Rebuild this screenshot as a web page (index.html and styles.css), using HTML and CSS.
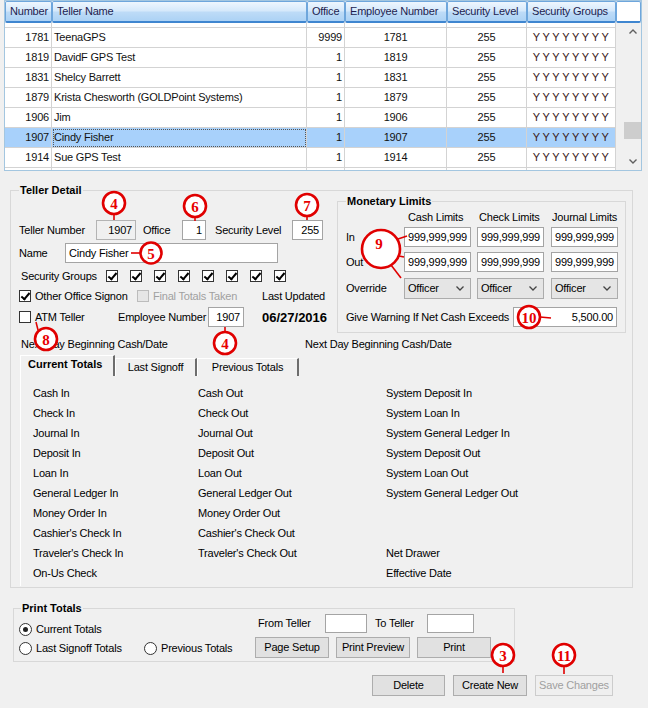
FILE: index.html
```html
<!DOCTYPE html>
<html>
<head>
<meta charset="utf-8">
<title>Teller Maintenance</title>
<link rel="stylesheet" href="styles.css">
</head>
<body>
<div class="grid">
  <div class="grid-head">
    <div class="th">Number</div>
    <div class="th">Teller Name</div>
    <div class="th">Office</div>
    <div class="th">Employee Number</div>
    <div class="th">Security Level</div>
    <div class="th">Security Groups</div>
    <div class="th blank"></div>
  </div>
  <div class="grid-body">
    <div class="rows">
      <div class="row stub"><div class="td"></div><div class="td"></div><div class="td"></div><div class="td"></div><div class="td"></div><div class="td"></div></div>
      <div class="row"><div class="td r">1781</div><div class="td">TeenaGPS</div><div class="td r">9999</div><div class="td c">1781</div><div class="td c">255</div><div class="td c yy">YYYYYYYY</div></div>
      <div class="row"><div class="td r">1819</div><div class="td">DavidF GPS Test</div><div class="td r">1</div><div class="td c">1819</div><div class="td c">255</div><div class="td c yy">YYYYYYYY</div></div>
      <div class="row"><div class="td r">1831</div><div class="td">Shelcy Barrett</div><div class="td r">1</div><div class="td c">1831</div><div class="td c">255</div><div class="td c yy">YYYYYYYY</div></div>
      <div class="row"><div class="td r">1879</div><div class="td">Krista Chesworth (GOLDPoint Systems)</div><div class="td r">1</div><div class="td c">1879</div><div class="td c">255</div><div class="td c yy">YYYYYYYY</div></div>
      <div class="row"><div class="td r">1906</div><div class="td">Jim</div><div class="td r">1</div><div class="td c">1906</div><div class="td c">255</div><div class="td c yy">YYYYYYYY</div></div>
      <div class="row sel"><div class="td r">1907</div><div class="td focus">Cindy Fisher</div><div class="td r">1</div><div class="td c">1907</div><div class="td c">255</div><div class="td c yy">YYYYYYYY</div></div>
      <div class="row"><div class="td r">1914</div><div class="td">Sue GPS Test</div><div class="td r">1</div><div class="td c">1914</div><div class="td c">255</div><div class="td c yy">YYYYYYYY</div></div>
      <div class="row"><div class="td"></div><div class="td"></div><div class="td"></div><div class="td"></div><div class="td"></div><div class="td"></div></div>
    </div>
    <div class="vscroll">
      <div class="sb-btn"><svg width="8" height="5" viewBox="0 0 8 5"><polyline points="0.5,4.5 4,1 7.5,4.5" fill="none" stroke="#606060" stroke-width="1.4"/></svg></div>
      <div class="sb-track"><div class="sb-thumb"></div></div>
      <div class="sb-btn"><svg width="8" height="5" viewBox="0 0 8 5"><polyline points="0.5,0.5 4,4 7.5,0.5" fill="none" stroke="#606060" stroke-width="1.4"/></svg></div>
    </div>
  </div>
</div>

<div class="group teller">
  <div class="group-title">Teller Detail</div>
  <div class="td-top">
    <div class="td-left">
      <div class="frow h20">
        <span class="lbl w77">Teller Number</span>
        <span class="tb ro w40">1907</span>
        <span class="lbl ml7 w39">Office</span>
        <span class="tb w24">1</span>
        <span class="lbl ml9 w77">Security Level</span>
        <span class="tb w31">255</span>
      </div>
      <div class="frow h20 mt3">
        <span class="lbl w46">Name</span>
        <span class="tb left w213">Cindy Fisher</span>
      </div>
      <div class="frow h14 mt6">
        <span class="lbl w87 pl2">Security Groups</span>
        <div class="cbs">
          <span class="cb on"></span><span class="cb on"></span><span class="cb on"></span><span class="cb on"></span>
          <span class="cb on"></span><span class="cb on"></span><span class="cb on"></span><span class="cb on"></span>
        </div>
      </div>
      <div class="frow h14 mt6">
        <span class="chk w118"><span class="cb on"></span><span class="cbl">Other Office Signon</span></span>
        <span class="chk w125 dis"><span class="cb off-dis"></span><span class="cbl">Final Totals Taken</span></span>
        <span class="lbl">Last Updated</span>
      </div>
      <div class="frow h20 mt4">
        <span class="chk w99"><span class="cb"></span><span class="cbl">ATM Teller</span></span>
        <span class="lbl w90">Employee Number</span>
        <span class="tb w36">1907</span>
        <span class="date">06/27/2016</span>
      </div>
    </div>
    <div class="group mon">
      <div class="group-title">Monetary Limits</div>
      <div class="mrow mhead">
        <span class="mlbl"></span>
        <span class="mcol"><span class="ml4">Cash Limits</span></span>
        <span class="mcol g6"><span class="ml2">Check Limits</span></span>
        <span class="mcol g7"><span class="ml1">Journal Limits</span></span>
      </div>
      <div class="mrow mt3 h20">
        <span class="mlbl">In</span>
        <span class="tb mbox">999,999,999</span>
        <span class="tb mbox g6">999,999,999</span>
        <span class="tb mbox g7">999,999,999</span>
      </div>
      <div class="mrow mt5 h20">
        <span class="mlbl">Out</span>
        <span class="tb mbox">999,999,999</span>
        <span class="tb mbox g6">999,999,999</span>
        <span class="tb mbox g7">999,999,999</span>
      </div>
      <div class="mrow mt6 h21">
        <span class="mlbl">Override</span>
        <span class="dd mbox">Officer<svg width="8" height="5" viewBox="0 0 8 5"><polyline points="0.5,0.5 4,4 7.5,0.5" fill="none" stroke="#444" stroke-width="1.3"/></svg></span>
        <span class="dd mbox g6">Officer<svg width="8" height="5" viewBox="0 0 8 5"><polyline points="0.5,0.5 4,4 7.5,0.5" fill="none" stroke="#444" stroke-width="1.3"/></svg></span>
        <span class="dd mbox g7">Officer<svg width="8" height="5" viewBox="0 0 8 5"><polyline points="0.5,0.5 4,4 7.5,0.5" fill="none" stroke="#444" stroke-width="1.3"/></svg></span>
      </div>
      <div class="mrow mt8 h20">
        <span class="lbl w167">Give Warning If Net Cash Exceeds</span>
        <span class="tb w104">5,500.00</span>
      </div>
    </div>
  </div>
  <div class="nextday">
    <span class="lbl w286 pl2">Next Day Beginning Cash/Date</span>
    <span class="lbl">Next Day Beginning Cash/Date</span>
  </div>
  <div class="tabs">
    <div class="tab sel w95">Current Totals</div>
    <div class="tab w82">Last Signoff</div>
    <div class="tab w102">Previous Totals</div>
  </div>
  <div class="tabpage">
    <div class="totals">
      <div>Cash In</div><div>Cash Out</div><div>System Deposit In</div>
      <div>Check In</div><div>Check Out</div><div>System Loan In</div>
      <div>Journal In</div><div>Journal Out</div><div>System General Ledger In</div>
      <div>Deposit In</div><div>Deposit Out</div><div>System Deposit Out</div>
      <div>Loan In</div><div>Loan Out</div><div>System Loan Out</div>
      <div>General Ledger In</div><div>General Ledger Out</div><div>System General Ledger Out</div>
      <div>Money Order In</div><div>Money Order Out</div><div></div>
      <div>Cashier's Check In</div><div>Cashier's Check Out</div><div></div>
      <div>Traveler's Check In</div><div>Traveler's Check Out</div><div>Net Drawer</div>
      <div>On-Us Check</div><div></div><div>Effective Date</div>
    </div>
  </div>
</div>

<div class="group print">
  <div class="group-title pt-title">Print Totals</div>
  <div class="pt-body">
    <div class="pt-left">
      <div class="frow h13 mt9">
        <span class="rb on"></span><span class="cbl">Current Totals</span>
      </div>
      <div class="frow h13 mt6">
        <span class="chk w125"><span class="rb"></span><span class="cbl">Last Signoff Totals</span></span>
        <span class="rb"></span><span class="cbl">Previous Totals</span>
      </div>
    </div>
    <div class="pt-right">
      <div class="frow h19">
        <span class="lbl w70 pl3">From Teller</span>
        <span class="tb w42"></span>
        <span class="lbl w52 ml8">To Teller</span>
        <span class="tb w47"></span>
      </div>
      <div class="frow mt4 btns">
        <span class="btn w74">Page Setup</span>
        <span class="btn w74">Print Preview</span>
        <span class="btn w74">Print</span>
      </div>
    </div>
  </div>
</div>

<div class="actions">
  <span class="btn w73">Delete</span>
  <span class="btn w74">Create New</span>
  <span class="btn w78 disabled">Save Changes</span>
</div>

<svg class="marks" width="648" height="708" viewBox="0 0 648 708">
  <line x1="114" y1="213" x2="114" y2="220"/>
  <circle cx="114" cy="203" r="11"/>
  <text x="114" y="208.5">4</text>

  <line x1="195" y1="216" x2="195" y2="221"/>
  <circle cx="195" cy="206" r="11"/>
  <text x="195" y="211.5">6</text>

  <line x1="307" y1="215" x2="307" y2="220"/>
  <circle cx="307" cy="205" r="11"/>
  <text x="307" y="210.5">7</text>

  <line x1="141" y1="253" x2="131" y2="253"/>
  <circle cx="151" cy="253" r="10.5"/>
  <text x="151" y="258.5">5</text>

  <line x1="38" y1="330" x2="36" y2="322"/>
  <circle cx="46" cy="339" r="11"/>
  <text x="46" y="344.5">8</text>

  <line x1="225" y1="333" x2="225" y2="327"/>
  <circle cx="225" cy="343" r="11"/>
  <text x="225" y="348.5">4</text>

  <line x1="395" y1="240" x2="407" y2="236"/>
  <line x1="394" y1="255" x2="404" y2="257"/>
  <line x1="391" y1="265" x2="401" y2="278"/>
  <circle cx="381" cy="249" r="19"/>
  <text x="379" y="249">9</text>

  <line x1="540" y1="317" x2="551" y2="318"/>
  <circle cx="529" cy="317" r="11"/>
  <text x="529" y="322.5">10</text>

  <line x1="503" y1="666" x2="503" y2="673"/>
  <circle cx="503" cy="655" r="11"/>
  <text x="503" y="660.5">3</text>

  <line x1="564" y1="666" x2="564" y2="674"/>
  <circle cx="564" cy="655" r="11"/>
  <text x="564" y="660.5">11</text>
</svg>
</body>
</html>
```

FILE: styles.css
```css
* { box-sizing: border-box; }
html, body { margin: 0; padding: 0; }
body {
  width: 648px;
  height: 708px;
  overflow: hidden;
  position: relative;
  background: #f0f0f0;
  font-family: "Liberation Sans", Arial, sans-serif;
  font-size: 11px;
  line-height: 13px;
  letter-spacing: -0.2px;
  color: #000;
}

/* ---------- data grid ---------- */
.grid {
  margin-left: 4px;
  width: 638px;
  height: 171px;
  border: 1px solid #a3c6e0;
  background: #f0f0f0;
  overflow: hidden;
}
.grid-head {
  display: grid;
  grid-template-columns: 47px 255px 38px 102px 80px 89px 25px;
  height: 22px;
}
.th {
  background: linear-gradient(#eef6fe, #d6e9fb 45%, #bddbf7 55%, #acd2f5);
  border: 1px solid #6ea6dc;
  border-bottom: 2px solid #3f86d0;
  border-radius: 2px;
  padding-left: 4px;
  line-height: 18px;
  color: #1d1d4f;
  white-space: nowrap;
  overflow: hidden;
}
.th.blank { background: #fff; }
.grid-body { display: flex; height: 147px; }
.rows { width: 611px; background: #fff; overflow: hidden; }
.row {
  display: grid;
  grid-template-columns: 47px 255px 38px 102px 80px 89px;
  height: 20px;
}
.row.stub { height: 5px; }
.td {
  border-right: 1px solid #d3d3d3;
  border-bottom: 1px solid #d3d3d3;
  line-height: 19px;
  padding: 0 2px;
  white-space: nowrap;
  overflow: hidden;
  color: #111;
}
.td.r { text-align: right; }
.td.c { text-align: center; }
.yy { letter-spacing: 2.5px; padding-left: 4px; color: #3a2020; }
.row.sel .td { background: #a8d1fb; }
.row.sel .focus { outline: 1px dotted #555; outline-offset: -2px; }
.vscroll {
  width: 25px;
  padding-left: 8px;
  display: flex;
  flex-direction: column;
  background: #f0f0f0;
}
.sb-btn {
  height: 17px;
  display: flex;
  align-items: center;
  justify-content: center;
}
.sb-track { flex: 1; }
.sb-thumb {
  margin-top: 82px;
  height: 17px;
  background: #cdcdcd;
}

/* ---------- group boxes ---------- */
.group { border: 1px solid #d8d8d8; }
.group-title {
  width: fit-content;
  margin-top: -7px;
  padding: 0 1px;
  background: #f0f0f0;
  font-weight: bold;
  line-height: 13px;
  letter-spacing: 0;
}
.teller {
  margin: 19px 15px 0 10px;
  padding: 0 0 1px 8px;
}
.td-top { display: flex; }
.td-left { width: 318px; padding-top: 23px; }

.frow { display: flex; align-items: center; }
.h13 { height: 13px; }
.h14 { height: 14px; }
.h19 { height: 19px; }
.h20 { height: 20px; }
.h21 { height: 21px; }
.mt3 { margin-top: 3px; }
.mt4 { margin-top: 4px; }
.mt5 { margin-top: 5px; }
.mt6 { margin-top: 6px; }
.mt8 { margin-top: 8px; }
.mt9 { margin-top: 9px; }
.ml1 { margin-left: 1px; }
.ml2 { margin-left: 2px; }
.ml4 { margin-left: 4px; }
.ml7 { margin-left: 7px; }
.ml8 { margin-left: 8px; }
.ml9 { margin-left: 9px; }
.pl2 { padding-left: 2px; }
.pl3 { padding-left: 3px; }

.lbl { white-space: nowrap; flex: none; }
.w24 { width: 24px; }
.w31 { width: 31px; }
.w36 { width: 36px; }
.w39 { width: 39px; }
.w40 { width: 40px; }
.w42 { width: 42px; }
.w46 { width: 46px; }
.w47 { width: 47px; }
.w52 { width: 52px; }
.w70 { width: 70px; }
.w73 { width: 73px; }
.w74 { width: 74px; }
.w77 { width: 77px; }
.w78 { width: 78px; }
.w82 { width: 82px; }
.w87 { width: 87px; }
.w90 { width: 90px; }
.w95 { width: 95px; }
.w99 { width: 99px; }
.w102 { width: 102px; }
.w104 { width: 104px; }
.w118 { width: 118px; }
.w125 { width: 125px; }
.w167 { width: 167px; }
.w213 { width: 213px; }
.w286 { width: 286px; }

.tb {
  flex: none;
  display: block;
  height: 20px;
  border: 1px solid #a4a4a4;
  background: #fff;
  text-align: right;
  padding: 0 3px;
  line-height: 18px;
  white-space: nowrap;
  overflow: hidden;
}
.h19 .tb { height: 19px; }
.tb.ro { background: #f0f0f0; border-color: #b4b4b4; }
.tb.left { text-align: left; }

.cbs { display: flex; gap: 12px; }
.cb {
  flex: none;
  width: 12px;
  height: 12px;
  border: 1px solid #333;
  background: #fff;
  position: relative;
}
.cb.on::after {
  content: "";
  position: absolute;
  left: 3px;
  top: 0px;
  width: 3px;
  height: 7px;
  border-right: 2px solid #000;
  border-bottom: 2px solid #000;
  transform: rotate(40deg);
}
.cb.off-dis { background: #e6e6e6; border-color: #bcbcbc; }
.chk { display: flex; align-items: center; flex: none; }
.cbl { margin-left: 4px; white-space: nowrap; }
.dis .cbl { color: #a0a0a0; }
.date {
  margin-left: 18px;
  font-weight: bold;
  font-size: 13px;
  letter-spacing: 0;
  white-space: nowrap;
}

/* monetary limits */
.mon {
  margin-top: 4px;
  width: 289px;
  height: 132px;
  padding-left: 8px;
}
.mon .group-title { margin-left: 0; }
.mrow { display: flex; align-items: center; }
.mhead { margin-top: 3px; height: 13px; }
.mlbl { width: 58px; flex: none; }
.mcol { width: 67px; flex: none; white-space: nowrap; }
.mbox { width: 67px; }
.g6 { margin-left: 6px; }
.g7 { margin-left: 7px; }
.dd {
  flex: none;
  height: 21px;
  border: 1px solid #acacac;
  background: #e5e5e5;
  display: flex;
  align-items: center;
  justify-content: space-between;
  padding: 0 6px 0 3px;
}

/* next day + tabs */
.nextday { display: flex; margin-top: 5px; height: 13px; }
.tabs {
  display: flex;
  align-items: flex-end;
  height: 21px;
  margin-top: 4px;
  padding-left: 1px;
}
.tab {
  height: 18px;
  border-top: 1px solid #fff;
  border-left: 1px solid #fff;
  border-right: 2px solid #6d6d6d;
  text-align: center;
  line-height: 16px;
  white-space: nowrap;
}
.tab.sel {
  height: 21px;
  font-weight: bold;
  line-height: 17px;
  text-align: left;
  padding-left: 7px;
  letter-spacing: 0;
}
.tabpage {
  margin-left: 1px;
  height: 210px;
  border-left: 1px solid #fff;
  padding: 7px 0 0 12px;
}
.totals {
  display: grid;
  grid-template-columns: 165px 188px 1fr;
  grid-auto-rows: 20px;
  line-height: 20px;
  white-space: nowrap;
}

/* print totals */
.print {
  margin: 20px 0 0 13px;
  width: 502px;
  padding: 0 0 3px 5px;
}
.pt-title { margin-left: 2px; margin-bottom: -1px; }
.pt-body { display: flex; }
.pt-left { width: 236px; flex: none; }
.rb {
  flex: none;
  width: 13px;
  height: 13px;
  border: 1px solid #333;
  border-radius: 50%;
  background: #fff;
  position: relative;
}
.rb.on::after {
  content: "";
  position: absolute;
  left: 3px;
  top: 3px;
  width: 5px;
  height: 5px;
  border-radius: 50%;
  background: #222;
}
.btns { gap: 7px; }
.btn {
  flex: none;
  display: block;
  height: 21px;
  border: 1px solid #adadad;
  background: #e1e1e1;
  text-align: center;
  line-height: 19px;
  white-space: nowrap;
}
.btn.disabled { background: #efefef; border-color: #cccccc; color: #a0a0a0; }
.actions {
  display: flex;
  gap: 8px;
  margin-top: 13px;
  padding-left: 372px;
}

/* annotation callouts */
.marks {
  position: absolute;
  left: 0;
  top: 0;
  pointer-events: none;
}
.marks circle { fill: #fff; stroke: #e00000; stroke-width: 2.6; }
.marks line { stroke: #e00000; stroke-width: 1.6; }
.marks text {
  font-family: "Liberation Serif", "Times New Roman", serif;
  font-weight: bold;
  font-size: 15px;
  letter-spacing: 0;
  fill: #e80000;
  text-anchor: middle;
}
```
